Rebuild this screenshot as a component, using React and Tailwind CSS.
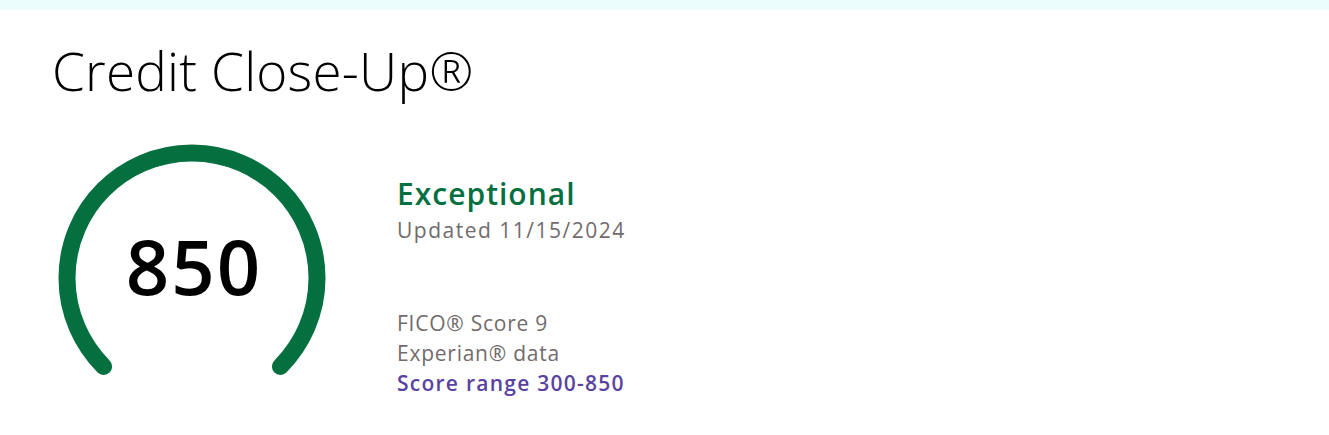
const GREEN = "#04703f";

function Gauge({ score }) {
  // 270° arc, open at the bottom
  const cx = 140;
  const cy = 140;
  const r = 125;
  const a = Math.PI / 4;
  const x1 = cx - r * Math.sin(a);
  const y1 = cy + r * Math.cos(a);
  const x2 = cx + r * Math.sin(a);
  const d = `M ${x1} ${y1} A ${r} ${r} 0 1 1 ${x2} ${y1}`;

  return (
    <div className="relative h-[240px] w-[280px] shrink-0">
      <svg width="280" height="240" viewBox="0 0 280 240" className="block">
        <path d={d} fill="none" stroke={GREEN} strokeWidth="17" strokeLinecap="round" />
      </svg>
      <div className="absolute left-0 top-[93px] flex w-[284px] justify-center">
        <span className="text-[76px] font-semibold leading-[70px] tracking-[2px] text-black">{score}</span>
      </div>
    </div>
  );
}

export default function App() {
  return (
    <div className="min-h-[435px] bg-white font-['Open_Sans',sans-serif]">
      <div className="h-[10px] bg-[#ebfdfd]" />
      <main className="px-[52px] pt-[34px]">
        <h1 className="text-[53px] font-light leading-none tracking-[0.2px] text-black">Credit Close-Up®</h1>
        <section className="mt-[41px] flex items-start gap-[65px]">
          <Gauge score="850" />
          <div className="mt-[39px] flex flex-col">
            <p className="text-[30px] font-semibold leading-[34px] tracking-[1px] text-[#04703f]">Exceptional</p>
            <p className="mt-[4px] text-[21px] leading-[30px] tracking-[1.5px] text-[#716b6c]">Updated 11/15/2024</p>
            <div className="mt-[63px] text-[21px] leading-[30px]">
              <p className="tracking-[0.75px] text-[#716b6c]">FICO® Score 9</p>
              <p className="tracking-[0.75px] text-[#716b6c]">Experian® data</p>
              <p className="font-semibold tracking-[1.25px] text-[#5943a0]">Score range 300-850</p>
            </div>
          </div>
        </section>
      </main>
    </div>
  );
}
